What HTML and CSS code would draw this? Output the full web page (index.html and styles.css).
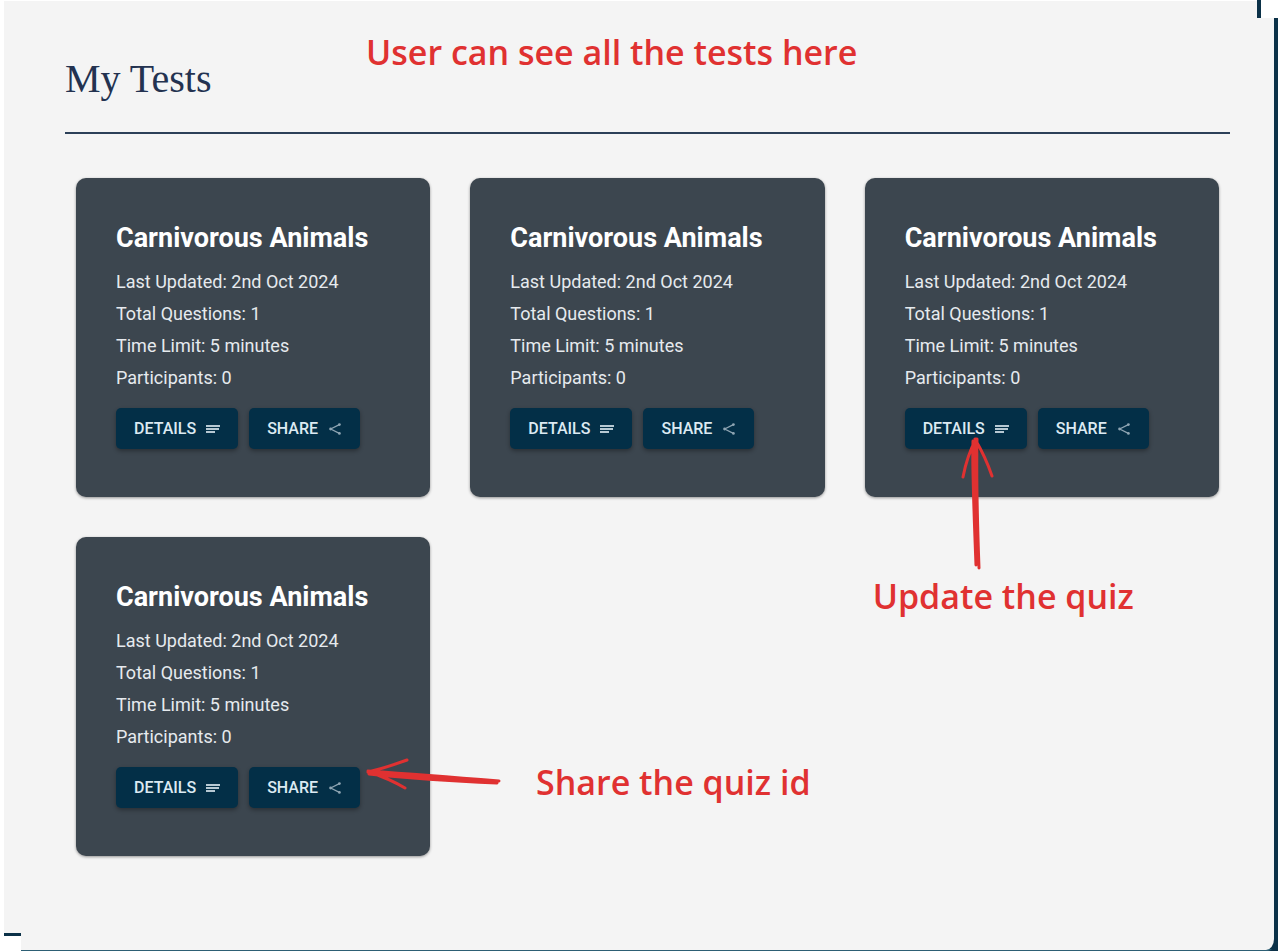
FILE: index.html
```html
<!DOCTYPE html>
<html lang="en">
<head>
<meta charset="utf-8">
<meta name="viewport" content="width=device-width, initial-scale=1">
<title>My Tests</title>
<link rel="stylesheet" href="styles.css">
</head>
<body>
<svg class="symbols" aria-hidden="true">
  <symbol id="icon-notes" viewBox="0 0 14 10"><path d="M0 1h14v2H0zM0 4h13v2H0zM0 7h9v2H0z" fill="currentColor"/></symbol>
  <symbol id="icon-share" viewBox="0 0 12 12"><path d="M10.3 1.6 1.7 6l8.6 4.4" fill="none" stroke="currentColor" stroke-width="1.2"/><circle cx="10.4" cy="1.6" r="1.4" fill="currentColor"/><circle cx="1.6" cy="6" r="1.4" fill="currentColor"/><circle cx="10.4" cy="10.4" r="1.4" fill="currentColor"/></symbol>
</svg>
<div class="frame">
  <main class="panel">
    <header class="header">
      <h1 class="title">My Tests</h1>
      <p class="note note-top">User can see all the tests here</p>
    </header>
    <section class="grid" aria-label="Tests">
      <article class="card">
        <h2 class="card-title">Carnivorous Animals</h2>
        <p class="line">Last Updated: 2nd Oct 2024</p>
        <p class="line">Total Questions: 1</p>
        <p class="line">Time Limit: 5 minutes</p>
        <p class="line">Participants: 0</p>
        <div class="actions">
          <button class="btn" type="button">DETAILS <svg class="icon-notes" aria-hidden="true"><use href="#icon-notes"/></svg></button>
          <button class="btn" type="button">SHARE <svg class="icon-share" aria-hidden="true"><use href="#icon-share"/></svg></button>
        </div>
      </article>
      <article class="card">
        <h2 class="card-title">Carnivorous Animals</h2>
        <p class="line">Last Updated: 2nd Oct 2024</p>
        <p class="line">Total Questions: 1</p>
        <p class="line">Time Limit: 5 minutes</p>
        <p class="line">Participants: 0</p>
        <div class="actions">
          <button class="btn" type="button">DETAILS <svg class="icon-notes" aria-hidden="true"><use href="#icon-notes"/></svg></button>
          <button class="btn" type="button">SHARE <svg class="icon-share" aria-hidden="true"><use href="#icon-share"/></svg></button>
        </div>
      </article>
      <article class="card">
        <h2 class="card-title">Carnivorous Animals</h2>
        <p class="line">Last Updated: 2nd Oct 2024</p>
        <p class="line">Total Questions: 1</p>
        <p class="line">Time Limit: 5 minutes</p>
        <p class="line">Participants: 0</p>
        <div class="actions">
          <button class="btn" type="button">DETAILS <svg class="icon-notes" aria-hidden="true"><use href="#icon-notes"/></svg></button>
          <button class="btn" type="button">SHARE <svg class="icon-share" aria-hidden="true"><use href="#icon-share"/></svg></button>
        </div>
        <svg class="arrow arrow-update" viewBox="0 0 36 134" aria-hidden="true"><path d="M14 5Q13 28 17 129M18 3Q17 50 20 132M15 5 18 128M17 3Q8 20 4 41M16 3Q27 22 33 40"/></svg>
        <p class="note note-update">Update the quiz</p>
      </article>
      <article class="card">
        <h2 class="card-title">Carnivorous Animals</h2>
        <p class="line">Last Updated: 2nd Oct 2024</p>
        <p class="line">Total Questions: 1</p>
        <p class="line">Time Limit: 5 minutes</p>
        <p class="line">Participants: 0</p>
        <div class="actions">
          <button class="btn" type="button">DETAILS <svg class="icon-notes" aria-hidden="true"><use href="#icon-notes"/></svg></button>
          <button class="btn" type="button">SHARE <svg class="icon-share" aria-hidden="true"><use href="#icon-share"/></svg></button>
        </div>
        <svg class="arrow arrow-share" viewBox="0 0 138 36" aria-hidden="true"><path d="M3 15Q50 21 131 26M4 17Q60 23 132 26M3 14Q60 18 134 24M3 15Q20 11 42 3M4 15Q25 22 40 31"/></svg>
        <p class="note note-share">Share the quiz id</p>
      </article>
    </section>
  </main>
  <div class="notch notch-top"></div>
  <div class="notch notch-bottom"></div>
</div>
</body>
</html>
```
FILE: styles.css
```css
* { box-sizing: border-box; }
body { margin: 0; background: #fff; font-family: Roboto, "Noto Sans", sans-serif; }
h1, h2, p { margin: 0; font-weight: 400; }
.symbols { position: absolute; width: 0; height: 0; }

.frame {
  position: relative;
  min-height: 100vh;
  padding: 1px 2px 0 4px;
  display: flex;
  background: linear-gradient(#fff, #fff) right top / 2px 100% no-repeat, linear-gradient(#fff, #fff) left top / 4px 100% no-repeat, linear-gradient(#fff, #fff) left top / 100% 1px no-repeat, #0b3148;
}
.panel {
  flex: 1;
  min-width: 0;
  padding: 49px 44px 90px 61px;
  background: #f4f4f4;
  border-right: 4px solid #0b3148;
  border-bottom: 1px solid #2d5f74;
  border-bottom-right-radius: 12px;
}

/* Open corners of the frame */
.notch { position: absolute; background: #fff; }
.notch-top { top: 0; right: 0; width: 23px; height: 18px; border-left: 4px solid #0b3148; }
.notch-bottom { left: 0; bottom: 0; width: 21px; height: 18px; background: linear-gradient(#0b3148, #0b3148) 4px 0 / 17px 3px no-repeat, #fff; }

.header { position: relative; padding-bottom: 24px; border-bottom: 2px solid #2c4058; }
.title {
  font-family: "Liberation Serif", serif;
  font-size: 40px;
  line-height: 58px;
  color: #233250;
}

.grid {
  display: grid;
  grid-template-columns: repeat(3, minmax(0, 1fr));
  gap: 40px;
  padding: 44px 11px 0;
}
.card {
  position: relative;
  padding: 40px 40px 48px;
  color: #e6eaee;
  background: #3c464f;
  border-radius: 10px;
  box-shadow: 0 1px 3px #0006;
}
.card-title { margin-bottom: 8px; font-size: 27px; line-height: 40px; font-weight: 700; color: #fff; white-space: nowrap; }
.line { font-size: 18px; line-height: 32px; }
.actions { display: flex; gap: 11px; margin-top: 14px; }
.btn {
  display: flex;
  align-items: center;
  gap: 10px;
  height: 41px;
  padding: 0 18px;
  border: 0;
  border-radius: 5px;
  font: 500 16px/24px Roboto, sans-serif;
  color: #dceaf2;
  background: #032f47;
  box-shadow: 0 2px 4px #0005;
}
.icon-notes { width: 14px; height: 10px; color: #b7c9d3; }
.icon-share { width: 14px; height: 12px; color: #8fa5b3; }

/* Red annotations laid over the cards */
.note {
  position: absolute;
  font-family: Excalifont, Virgil, "Open Sans", sans-serif;
  font-size: 34px;
  line-height: 44px;
  font-weight: 600;
  color: #e03131;
  white-space: nowrap;
}
.note-top { left: 301px; top: -20px; }
.note-update { left: 8px; top: 396px; }
.note-share { left: 460px; top: 223px; }
.arrow { position: absolute; fill: none; stroke: #e03131; stroke-width: 3; stroke-linecap: round; stroke-linejoin: round; }
.arrow-update { left: 94px; top: 258px; width: 36px; height: 134px; }
.arrow-share { left: 289px; top: 220px; width: 138px; height: 36px; }
```
